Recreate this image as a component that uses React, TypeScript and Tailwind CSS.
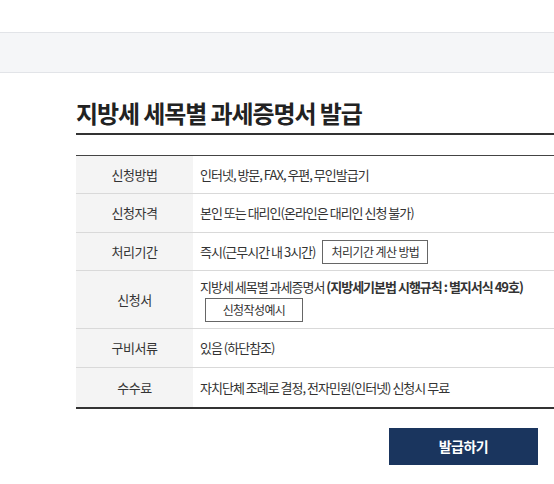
const rows = [
  { label: '신청방법', value: '인터넷, 방문, FAX, 우편, 무인발급기', h: 'h-[38px]' },
  { label: '신청자격', value: '본인 또는 대리인(온라인은 대리인 신청 불가)', h: 'h-[39px]' },
];

const Cell = ({ label, children, h }: { label: string; children: React.ReactNode; h: string }) => (
  <div className={`flex border-b border-[#d9d9d9] last:border-b-0 ${h}`}>
    <div className="w-[117px] shrink-0 bg-[#f4f4f4] flex items-center justify-center text-[13px] text-[#333] tracking-[-0.4px]">
      {label}
    </div>
    <div className="flex-1 pl-[7px] flex flex-col justify-center text-[13px] text-[#333] tracking-[-1px]">
      {children}
    </div>
  </div>
);

const BoxButton = ({ children, w }: { children: React.ReactNode; w: string }) => (
  <span className={`inline-flex h-[24px] items-center justify-center border border-[#666] bg-white text-[12px] text-[#333] tracking-[-0.6px] ${w}`}>
    {children}
  </span>
);

export default function App() {
  return (
    <div className="w-[554px] h-[484px] overflow-hidden bg-white font-['Noto_Sans_CJK_KR',sans-serif]">
      <div className="h-[32px]" />
      <div className="h-[41px] bg-[#f5f6f8] border-y border-[#e2e4e8]" />
      <div className="pl-[76px]">
        <h1 className="mt-[20px] h-[40px] text-[24px] font-bold text-[#222] tracking-[-1.1px] leading-[40px]">
          지방세 세목별 과세증명서 발급
        </h1>
        <div className="h-[2px] bg-[#333]" />
        <div className="mt-[20px] border-t border-[#444] border-b-2 border-b-[#333]">
          {rows.map((r) => (
            <Cell key={r.label} label={r.label} h={r.h}>
              <span>{r.value}</span>
            </Cell>
          ))}
          <Cell label="처리기간" h="h-[38px]">
            <div className="flex items-center gap-[7px]">
              <span>즉시(근무시간 내 3시간)</span>
              <BoxButton w="w-[106px]">처리기간 계산 방법</BoxButton>
            </div>
          </Cell>
          <Cell label="신청서" h="h-[58px]">
            <div className="flex flex-col gap-[2px]">
              <span>
                지방세 세목별 과세증명서 <b className="font-bold">(지방세기본법 시행규칙 : 별지서식 49호)</b>
              </span>
              <div className="pl-[5px]">
                <BoxButton w="w-[98px]">신청작성예시</BoxButton>
              </div>
            </div>
          </Cell>
          <Cell label="구비서류" h="h-[39px]">
            <span>있음 (하단참조)</span>
          </Cell>
          <Cell label="수수료" h="h-[39px]">
            <span>자치단체 조례로 결정, 전자민원(인터넷) 신청시 무료</span>
          </Cell>
        </div>
        <div className="flex justify-end pr-[16px] mt-[19px]">
          <button className="w-[149px] h-[37px] bg-[#1a355e] text-white text-[14px] font-bold tracking-[-0.5px]">
            발급하기
          </button>
        </div>
      </div>
    </div>
  );
}
